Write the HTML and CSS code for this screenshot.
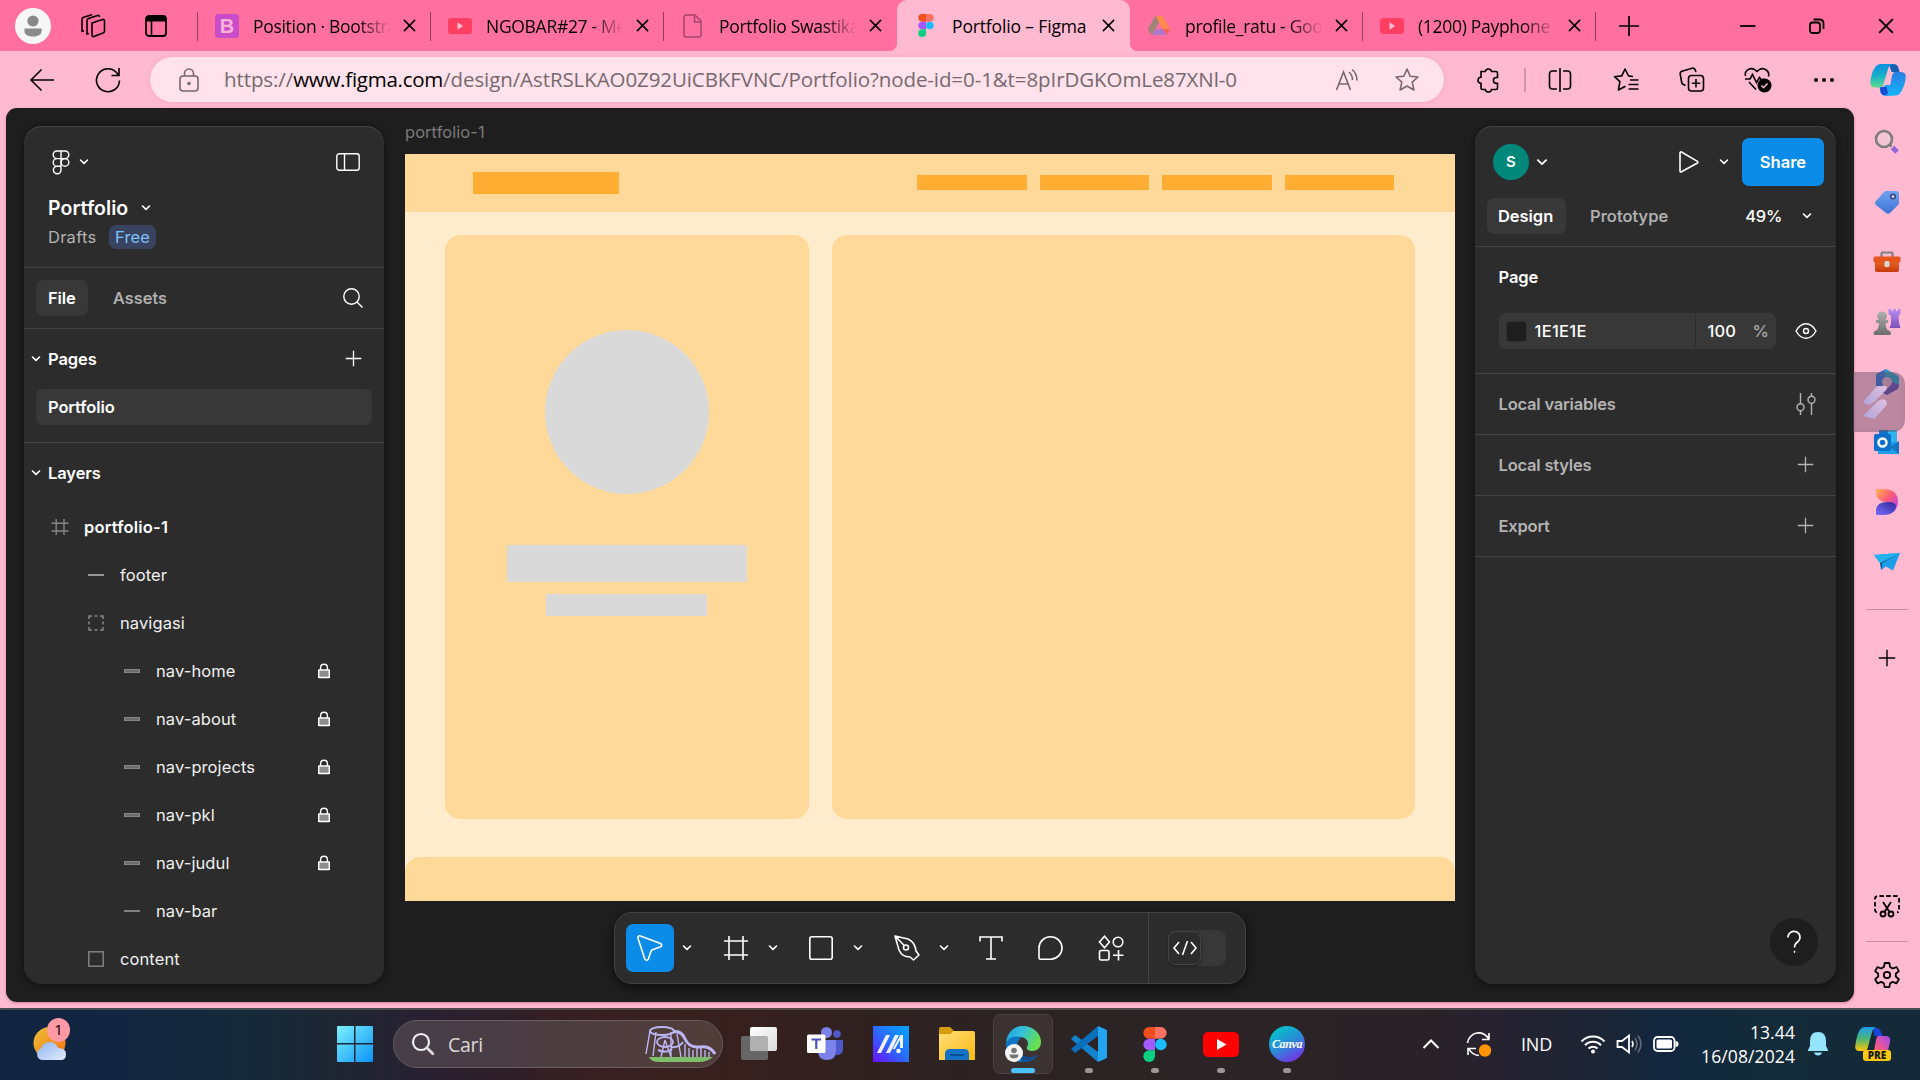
FILE: index.html
```html
<!DOCTYPE html>
<html lang="id">
<head>
<meta charset="utf-8">
<title>Portfolio – Figma</title>
<link rel="stylesheet" href="styles.css">
</head>
<body>
<svg width="0" height="0" class="defs">
  <defs>
    <linearGradient id="gWin" x1="0" y1="0" x2="1" y2="1"><stop offset="0" stop-color="#7df0ff"/><stop offset="1" stop-color="#0a93f5"/></linearGradient>
    <linearGradient id="gCop1" x1="0" y1="0" x2="0" y2="1"><stop offset="0" stop-color="#0d8fe0"/><stop offset=".5" stop-color="#16b0c8"/><stop offset="1" stop-color="#5fdc8c"/></linearGradient>
    <linearGradient id="gCop2" x1="0" y1="0" x2="0" y2="1"><stop offset="0" stop-color="#2a7de0"/><stop offset="1" stop-color="#14b4fa"/></linearGradient>
    <linearGradient id="gPre1" x1="0" y1="0" x2="0" y2="1"><stop offset="0" stop-color="#1a9df0"/><stop offset=".5" stop-color="#4fb575"/><stop offset="1" stop-color="#ffc400"/></linearGradient>
    <linearGradient id="gPre2" x1="1" y1="0" x2="0" y2="1"><stop offset="0" stop-color="#a04bf0"/><stop offset=".6" stop-color="#f0588c"/><stop offset="1" stop-color="#ff8a4a"/></linearGradient>
    <linearGradient id="gDes" x1="0" y1="0" x2="1" y2="1"><stop offset="0" stop-color="#ffb650"/><stop offset=".45" stop-color="#ff5a78"/><stop offset="1" stop-color="#a63cff"/></linearGradient>
    <linearGradient id="gDes2" x1="1" y1="0" x2="0" y2="1"><stop offset="0" stop-color="#2a2a96"/><stop offset="1" stop-color="#7d6bff"/></linearGradient>
    <linearGradient id="gTag" x1="0" y1="0" x2="0" y2="1"><stop offset="0" stop-color="#6ea2ee"/><stop offset="1" stop-color="#3f73d8"/></linearGradient>
    <linearGradient id="gBox" x1="0" y1="0" x2="0" y2="1"><stop offset="0" stop-color="#f0702c"/><stop offset="1" stop-color="#c63a0c"/></linearGradient>
    <linearGradient id="gRook" x1="0" y1="0" x2="0" y2="1"><stop offset="0" stop-color="#b98cf0"/><stop offset="1" stop-color="#7a52b8"/></linearGradient>
    <linearGradient id="gGray" x1="0" y1="0" x2="0" y2="1"><stop offset="0" stop-color="#b0b0b0"/><stop offset="1" stop-color="#6c6c6c"/></linearGradient>
    <linearGradient id="gAsus" x1="1" y1="0" x2="0" y2="1"><stop offset="0" stop-color="#00a5ff"/><stop offset=".5" stop-color="#2a6cff"/><stop offset="1" stop-color="#6a10ff"/></linearGradient>
    <linearGradient id="gFold" x1="0" y1="0" x2="1" y2="1"><stop offset="0" stop-color="#ffe07a"/><stop offset="1" stop-color="#fcb810"/></linearGradient>
    <linearGradient id="gEdge" x1="0" y1="0" x2="1" y2=".4"><stop offset="0" stop-color="#1b9de2"/><stop offset=".5" stop-color="#35c1d8"/><stop offset="1" stop-color="#66e04e"/></linearGradient>
    <linearGradient id="gCanva" x1=".2" y1="0" x2=".8" y2="1"><stop offset="0" stop-color="#00c8c8"/><stop offset=".5" stop-color="#2a8ad8"/><stop offset="1" stop-color="#7d2ae8"/></linearGradient>
    <linearGradient id="gSun" x1="0" y1="0" x2="1" y2="1"><stop offset="0" stop-color="#ecc43a"/><stop offset="1" stop-color="#f56a0c"/></linearGradient>
    <linearGradient id="gCloud" x1="0" y1="0" x2="1" y2="1"><stop offset="0" stop-color="#8fb4f0"/><stop offset="1" stop-color="#e2ecfc"/></linearGradient>
    <linearGradient id="gTV" x1="0" y1="0" x2="1" y2="1"><stop offset="0" stop-color="#fff"/><stop offset="1" stop-color="#dcdcdc"/></linearGradient>
    <linearGradient id="gPill" x1="1" y1="0" x2="0" y2="1"><stop offset="0" stop-color="#e0bfe0"/><stop offset="1" stop-color="#b0a4da"/></linearGradient>
  </defs>
  <symbol id="chev" viewBox="0 0 10 6"><path d="M1.5 1l3.5 3.4L8.5 1" fill="none" stroke="currentColor" stroke-width="1.6" stroke-linecap="round" stroke-linejoin="round"/></symbol>
  <symbol id="x" viewBox="0 0 14 14"><path d="M1 1l12 12M13 1L1 13" fill="none" stroke="currentColor" stroke-width="1.7"/></symbol>
  <symbol id="plus" viewBox="0 0 18 18"><path d="M9 .8v16.4M.8 9h16.4" fill="none" stroke="currentColor" stroke-width="1.4"/></symbol>
  <symbol id="ytOld" viewBox="0 0 24 16"><rect width="24" height="16" rx="3" fill="#ff3f62"/><path d="M9.5 4.2v7.6l5.5-3.8z" fill="#ffc0d2"/></symbol>
  <symbol id="figma" viewBox="0 0 24 36"><path d="M6 0h6v12H6A6 6 0 0 1 6 0z" fill="#f24e1e"/><path d="M12 0h6a6 6 0 0 1 0 12h-6z" fill="#ff7262"/><path d="M6 12h6v12H6a6 6 0 0 1 0-12z" fill="#a259ff"/><circle cx="18" cy="18" r="6" fill="#1abcfe"/><path d="M6 24h6v6a6 6 0 1 1-6-6z" fill="#0acf83"/></symbol>
  <symbol id="lock" viewBox="0 0 14 16"><rect x="1.8" y="7.2" width="10.4" height="7.2" fill="#8c8c8c"/><path d="M3.6 7V4.6a3.4 3.4 0 0 1 6.8 0V7M1.7 7h10.6v7.5H1.7z" fill="none" stroke="#fff" stroke-width="1.4" stroke-linejoin="round"/></symbol>
  <symbol id="bar" viewBox="0 0 16 4"><rect x=".5" y=".5" width="15" height="3" fill="#6b6b6b" stroke="#868686"/></symbol>
</svg>

<header class="tabstrip">
  <div class="profile"><svg width="36" height="36" viewBox="0 0 36 36"><circle cx="18" cy="18" r="18" fill="#f7f6f7"/><circle cx="18" cy="13" r="5.6" fill="#8a8888"/><path d="M9.5 20.5h17v3c0 3-4 5-8.500 5s-8.500-2-8.500-5z" fill="#8a8888"/></svg></div>
  <div class="stripbtn"><svg class="ic" width="26" height="24" viewBox="0 0 26 24"><path d="M12 9l10.500-3.500q2-.5 2 1.500v10q0 1.500-1.500 2L14 22.500q-2 .5-2-1.500z"/><path d="M9 19.500l-2 .5V6.500Q7 5 8.500 4.500l9-3q2-.5 2 1.500"/><path d="M4 17l-2 .5V5.500Q2 4 3.500 3.500L12 1" transform="translate(0 -.2)"/></svg></div>
  <div class="stripbtn"><svg width="22" height="22" viewBox="0 0 22 22"><rect x="1" y="1" width="20" height="20" rx="3" fill="none" stroke="#000" stroke-width="1.8"/><path d="M1 3q0-2 2-2h16q2 0 2 2v3.500H1z"/><path d="M6.500 6v15" stroke="#000" stroke-width="1.600"/></svg></div>
  <nav class="tabs">
    <div class="tab"><svg class="fav" width="24" height="24" viewBox="0 0 24 24"><rect width="24" height="24" rx="3" fill="#c94dc8"/><text x="12" y="19" text-anchor="middle" class="bs">B</text></svg><span class="tt">Position · Bootstra</span><svg class="cl"><use href="#x"/></svg></div>
    <div class="tab"><svg class="fav" width="24" height="16"><use href="#ytOld"/></svg><span class="tt">NGOBAR#27 - Me</span><svg class="cl"><use href="#x"/></svg></div>
    <div class="tab"><svg class="fav" width="24" height="24" viewBox="0 0 24 24"><path d="M5 1h9l6 6v14q0 2-2 2H5q-2 0-2-2V3q0-2 2-2zM13.500 1v7H20" fill="none" stroke="#a34569" stroke-width="1.500" stroke-linejoin="round"/></svg><span class="tt">Portfolio Swastika</span><svg class="cl"><use href="#x"/></svg></div>
    <div class="tab active"><svg class="fav" width="24" height="23"><use href="#figma"/></svg><span class="tt full">Portfolio – Figma</span><svg class="cl"><use href="#x"/></svg></div>
    <div class="tab"><svg class="fav" width="24" height="21" viewBox="0 0 24 21"><path d="M8.500 1h7l-8 14-3.500 5L1 14z" fill="#a87c7c"/><path d="M8.500 1h7L23 14h-7z" fill="#ff8a4c"/><path d="M1 14l7.500-13L12 7 5 20z" fill="#a08478"/><path d="M5 20l3.500-6H23l-3.500 6z" fill="#b078c8"/><path d="M16 14h7l-3.500 6z" fill="#ff5a5c"/></svg><span class="tt">profile_ratu - Goo</span><svg class="cl"><use href="#x"/></svg></div>
    <div class="tab"><svg class="fav" width="24" height="16"><use href="#ytOld"/></svg><span class="tt">(1200) Payphone</span><svg class="cl"><use href="#x"/></svg></div>
  </nav>
  <div class="newtab"><svg width="22" height="22"><use href="#plus"/></svg></div>
  <div class="winctl">
    <span><svg width="16" height="16" viewBox="0 0 16 16"><path d="M0 8h15.500" stroke="#000" stroke-width="1.800"/></svg></span>
    <span><svg class="ic w18" width="16" height="16" viewBox="0 0 16 16"><rect x="1" y="4.500" width="10" height="10.500" rx="2.500"/><path d="M4.500 1.500h6q4 0 4 4V11"/></svg></span>
    <span><svg width="16" height="16"><use href="#x"/></svg></span>
  </div>
</header>

<div class="toolbar">
  <span class="tb"><svg class="ic" width="26" height="24" viewBox="0 0 26 24"><path d="M25 12H2M12.500 1.500L2 12l10.500 10.500"/></svg></span>
  <span class="tb"><svg class="ic" width="26" height="26" viewBox="0 0 26 26"><path d="M24.500 13.500A11.500 11.500 0 1 1 21 5l2.500 3M24 1v7.500h-7.500"/></svg></span>
  <div class="address">
    <svg class="ic lockurl" width="20" height="24" viewBox="0 0 20 24"><rect x="1" y="8" width="18" height="15" rx="3"/><path d="M5.500 8V5.500a4.500 4.500 0 0 1 9 0V8"/><circle cx="10" cy="15.500" r="1" fill="currentColor"/></svg>
    <span class="url">https://<b>www.figma.com</b>/design/AstRSLKAO0Z92UiCBKFVNC/Portfolio?node-id=0-1&amp;t=8pIrDGKOmLe87XNl-0</span>
    <svg class="ic" width="26" height="24" viewBox="0 0 26 24"><path d="M1.500 22L8.500 4l7 18M4 16h9M14 4q3.500 3 3.500 8M17 1.500q5 4 5 11"/></svg>
    <svg class="ic star" width="26" height="26" viewBox="0 0 26 26"><path d="M13 2l3.200 7.200 7.800.8-5.800 5.200 1.700 7.800-6.900-4-6.900 4 1.700-7.800L2 10l7.800-.8z" stroke-linejoin="round"/></svg>
  </div>
  <span class="tb"><svg class="ic" width="24" height="26" viewBox="0 0 24 26"><path d="M5 4.500h4.200a3.300 3.300 0 0 1 6.400 0H20q1.500 0 1.500 1.500v4.500h-1.200a2.900 2.900 0 0 0 0 5.800h1.200V21q0 1.500-1.500 1.500h-4.400a3.300 3.300 0 0 1-6.400 0H6.500Q5 22.500 5 21v-4.700a3 3 0 0 1 0-6z"/></svg></span>
  <i class="vsep"></i>
  <span class="tb"><svg class="ic" width="24" height="24" viewBox="0 0 24 24"><path d="M9 3H4.500Q1.500 3 1.500 6v12q0 3 3 3H9M15 3h4.500q3 0 3 3v12q0 3-3 3H15M12 0v24"/></svg></span>
  <span class="tb"><svg class="ic" width="26" height="24" viewBox="0 0 26 24"><path d="M20 8.500l-4.500-.6L12 1 8.800 7.900l-7.300.8 5.400 5L5.400 22l7-3.800M17 12h8.500M15.500 16.500h10M15.500 21h10" stroke-linejoin="round"/></svg></span>
  <span class="tb"><svg class="ic" width="26" height="26" viewBox="0 0 26 26"><rect x="9.500" y="8.500" width="15" height="15.500" rx="3"/><path d="M17 12v8.500M12.800 16.200h8.500M6.500 18.500l-2-1Q3 17 2.700 15.500L1.200 7Q.9 5 3 4.200l10-3q2-.5 3 1.300l1 2.500"/></svg></span>
  <span class="tb"><svg class="ic" width="28" height="26" viewBox="0 0 28 26"><path d="M1.500 9C0 4 6 0 10.500 2.500L13 4.500l2.500-2C20 0 26 4 24.500 9.500M1 12h5l2.500-4.500 4 8 3-5 1.500 2h4M5 15l7 7.500"/><circle cx="20.500" cy="18.500" r="7" fill="#000" stroke="none"/><path d="M17.500 18.500l2 2.200 4-4.200" stroke="#ffb9d1"/></svg></span>
  <span class="tb"><svg width="22" height="6" viewBox="0 0 22 6"><circle cx="3" cy="3" r="2"/><circle cx="11" cy="3" r="2"/><circle cx="19" cy="3" r="2"/></svg></span>
  <span class="tb"><svg width="36" height="33" viewBox="0 0 36 33"><path d="M15 22l-5 6q1 4.500 5 4.500h7q4 0 5.500-4.500l2-6z" fill="#1ba6f5"/><path d="M9.500 24h7l2 8.500h-3q-4 0-5-4z" fill="#1a4bd6"/><path d="M19 1h4q4.500 0 5.500 4l1 4h-8z" fill="#155fb4"/><path d="M11 1h12q-4 1-5 5l-4.500 15q-1 3.500-4.500 3.500H5q-5.500 0-4.500-7Q2 8 5 4.500 7 1 11 1z" fill="url(#gCop1)"/><path d="M25 9h6q5.500 0 4.700 6-1 8-4.200 13-2 4.500-6 4.500H14q4-1 5-4.500l3-15q1-4 3-4z" fill="url(#gCop2)"/></svg></span>
</div>

<main class="body">
  <div class="stage">
    <aside class="panel left">
      <div class="phead">
        <svg class="ic w14" width="18" height="25" viewBox="0 0 18 25"><path d="M9 1H5a3.800 3.800 0 0 0 0 7.600h4zM9 1h4a3.800 3.800 0 0 1 0 7.600H9zM9 8.600H5a3.800 3.800 0 0 0 0 7.600h4zM9 16.200H5A3.800 3.800 0 1 0 9 20z"/><circle cx="13" cy="12.400" r="3.800"/></svg>
        <svg class="chev g14"><use href="#chev"/></svg>
        <svg class="ic w14 end" width="24" height="18" viewBox="0 0 24 18"><rect x=".8" y=".8" width="22.400" height="16.400" rx="2.500"/><path d="M8.500 1v16"/></svg>
      </div>
      <div class="fname"><strong>Portfolio</strong><svg class="chev"><use href="#chev"/></svg></div>
      <div class="drafts"><span>Drafts</span><em>Free</em></div>
      <div class="ptabs"><span class="pill">File</span><span class="mut">Assets</span><svg class="ic w14 end" width="20" height="20" viewBox="0 0 20 20"><circle cx="8.500" cy="8.500" r="7.700"/><path d="M14 14l5.500 5.500"/></svg></div>
      <div class="sect"><svg class="chev"><use href="#chev"/></svg><b>Pages</b><svg class="end" width="17" height="17"><use href="#plus"/></svg></div>
      <div class="pageitem">Portfolio</div>
      <div class="sect layers"><svg class="chev"><use href="#chev"/></svg><b>Layers</b></div>
      <ul class="tree">
        <li class="l0"><svg class="ic w14" width="18" height="18" viewBox="0 0 18 18"><path d="M5.200 1v16M13 1v16M.5 5.200h17M.5 13h17"/></svg><b>portfolio-1</b></li>
        <li class="l1"><svg width="16" height="4" viewBox="0 0 16 4"><path d="M0 2h16" stroke="#969696" stroke-width="2"/></svg>footer</li>
        <li class="l1"><svg width="16" height="16" viewBox="0 0 16 16"><path d="M1 4V1h3M6.500 1h3M12 1h3v3M15 6.500v3M15 12v3h-3M9.500 15h-3M4 15H1v-3M1 9.500v-3" fill="none" stroke="#868686" stroke-width="1.500"/></svg>navigasi</li>
        <li class="l2"><svg width="16" height="4"><use href="#bar"/></svg>nav-home<svg class="lk"><use href="#lock"/></svg></li>
        <li class="l2"><svg width="16" height="4"><use href="#bar"/></svg>nav-about<svg class="lk"><use href="#lock"/></svg></li>
        <li class="l2"><svg width="16" height="4"><use href="#bar"/></svg>nav-projects<svg class="lk"><use href="#lock"/></svg></li>
        <li class="l2"><svg width="16" height="4"><use href="#bar"/></svg>nav-pkl<svg class="lk"><use href="#lock"/></svg></li>
        <li class="l2"><svg width="16" height="4"><use href="#bar"/></svg>nav-judul<svg class="lk"><use href="#lock"/></svg></li>
        <li class="l2"><svg width="16" height="4" viewBox="0 0 16 4"><path d="M0 2h16" stroke="#808080" stroke-width="2"/></svg>nav-bar</li>
        <li class="l1"><svg width="16" height="16" viewBox="0 0 16 16"><rect x=".8" y=".8" width="14.400" height="14.400" fill="none" stroke="#868686" stroke-width="1.400"/></svg>content</li>
      </ul>
    </aside>

    <section class="canvas">
      <div class="framename">portfolio-1</div>
      <div class="artboard">
        <div class="a-nav"><i class="a-title"></i><i class="a-link"></i><i class="a-link"></i><i class="a-link"></i><i class="a-link"></i></div>
        <div class="a-main">
          <div class="a-card"><i class="a-photo"></i><i class="a-line"></i><i class="a-line small"></i></div>
          <div class="a-card wide"></div>
        </div>
        <div class="a-footer"></div>
      </div>
      <div class="tools">
        <span class="tool sel"><svg class="ic" width="28" height="28" viewBox="0 0 28 28"><path d="M2 4.200L8.800 25q.5 1.300 1.800 1.300t1.800-1.300l2.500-7.500q.5-1.200 1.600-1.700l8-3q1.200-.5 1.200-1.700t-1.200-1.700L4.500 2Q3.200 1.500 2.400 2.300T2 4.200z" stroke-linejoin="round"/></svg></span>
        <svg class="chev"><use href="#chev"/></svg>
        <span class="tool"><svg class="ic" width="24" height="24" viewBox="0 0 24 24"><path d="M5 0v24M19 0v24M0 5h24M0 19h24"/></svg></span>
        <svg class="chev"><use href="#chev"/></svg>
        <span class="tool"><svg class="ic" width="24" height="24" viewBox="0 0 24 24"><rect x=".8" y=".8" width="22.400" height="22.400" rx="2"/></svg></span>
        <svg class="chev"><use href="#chev"/></svg>
        <span class="tool"><svg class="ic" width="26" height="26" viewBox="0 0 26 26"><path d="M1 1l13 3q7 3 8 12l3 4-5.500 5-3.500-3Q8 22 5 15zM1 1l9.500 9.800" stroke-linejoin="round"/><circle cx="12" cy="12.500" r="2.500"/></svg></span>
        <svg class="chev"><use href="#chev"/></svg>
        <span class="tool t1"><svg class="ic" width="24" height="24" viewBox="0 0 24 24"><path d="M1 5.500V1h22v4.500M12 1v22M7 23h10"/></svg></span>
        <span class="tool t2"><svg class="ic" width="26" height="24" viewBox="0 0 26 24"><path d="M1 12A11.500 11.200 0 1 1 13 23.200H2.500Q1 23.200 1 21.700z"/></svg></span>
        <span class="tool t3"><svg class="ic" width="26" height="26" viewBox="0 0 26 26"><path d="M6.500 1.200l5 5.800-5 5.800L1.500 7zM20.500 15v10.500M15 20.200h10.500"/><circle cx="20" cy="7" r="4.800"/><rect x="1.500" y="15.500" width="9.500" height="9.500" rx="1.500"/></svg></span>
        <i class="tdiv"></i>
        <span class="toggle"><span><svg class="ic" width="24" height="16" viewBox="0 0 24 16"><path d="M6 2L1 8l5 6M18 2l5 6-5 6M14.500 1l-5 14"/></svg></span></span>
      </div>
    </section>

    <aside class="panel right">
      <div class="rhead">
        <span class="ava">S</span><svg class="chev big"><use href="#chev"/></svg>
        <svg class="ic play" width="20" height="22" viewBox="0 0 20 22"><path d="M1 2.200v17.600q0 1.700 1.500 1L18 12.300q1.700-1 0-2.200L2.500 1Q1 .5 1 2.200z"/></svg>
        <svg class="chev"><use href="#chev"/></svg><span class="share">Share</span>
      </div>
      <div class="rtabs"><span class="pill">Design</span><span class="mut">Prototype</span><span class="zoom">49%</span><svg class="chev"><use href="#chev"/></svg></div>
      <div class="page">
        <b>Page</b>
        <div class="fill"><div class="field"><i></i><span>1E1E1E</span><span class="pc">100</span><span class="pct">%</span></div>
        <svg class="ic w14" width="22" height="16" viewBox="0 0 22 16"><path d="M1 8Q5 .8 11 .8T21 8q-4 7.200-10 7.200T1 8z"/><circle cx="11" cy="8" r="2.500"/></svg></div>
      </div>
      <div class="rrow">Local variables<svg class="ic w14" width="20" height="22" viewBox="0 0 20 22"><path d="M4.500 0v10.500M4.500 18v4M15.500 0v3M15.500 10.500V22"/><circle cx="4.500" cy="14.300" r="3.500"/><circle cx="15.500" cy="6.800" r="3.500"/></svg></div>
      <div class="rrow">Local styles<svg class="pl" width="17" height="17"><use href="#plus"/></svg></div>
      <div class="rrow">Export<svg class="pl" width="17" height="17"><use href="#plus"/></svg></div>
      <div class="help"><svg class="ic" width="14" height="22" viewBox="0 0 14 22"><path d="M1 6.500A6 5.800 0 1 1 11 10.500Q7.500 13 7.500 16.500"/><circle cx="7.500" cy="20.800" r=".6" fill="#fff" stroke-width="1"/></svg></div>
    </aside>
  </div>

  <aside class="edgebar">
    <span><svg width="26" height="26" viewBox="0 0 26 26"><circle cx="10" cy="10" r="8" fill="#f3c6d6" stroke="#7c7c7c" stroke-width="2.600"/><path d="M15.500 15.500l2 2" stroke="#777" stroke-width="2.500"/><path d="M18.500 18.500l4.500 4.500" stroke="#9166d8" stroke-width="5"/></svg></span>
    <span><svg width="26" height="26" viewBox="0 0 26 26"><path d="M12 2h10q3 0 3 3v9q0 1-1 2l-8 8q-2 1.500-4 0L2 16q-2-2 0-4l8-9q1-1 2-1z" fill="url(#gTag)"/><circle cx="19" cy="7.500" r="2.300" fill="#d4c0e8" stroke="#2f4580" stroke-width="1.500"/></svg></span>
    <span><svg width="28" height="22" viewBox="0 0 28 22"><path d="M8.500 6V2.500q0-1 1-1h9q1 0 1 1V6" fill="none" stroke="#808080" stroke-width="2.200"/><path d="M2 8h24v11q0 2-2 2H4q-2 0-2-2z" fill="url(#gBox)"/><rect x=".5" y="5.500" width="27" height="6" rx="1.500" fill="#e8551c"/><rect x="11.500" y="10" width="5" height="6" rx="1.500" fill="#d8d8d8"/></svg></span>
    <span><svg width="28" height="28" viewBox="0 0 28 28"><path d="M15.500 1h2.500v2h2V1h3v2h2V1h2.500v5l-2 2 .8 8 1.200 4h-11l1.500-4L18 8l-2.500-2z" fill="url(#gRook)"/><path d="M9 3.500a4.800 4.800 0 0 1 3.200 8.500H15v3h-2.500q0 4 2 7 3.500 1 3.500 3.500 0 1.500-2 1.500H2.500q-2 0-2-1.500Q.5 23 4 22q2-3 2-7H3v-3h3A4.800 4.800 0 0 1 9 3.500z" fill="url(#gGray)"/></svg></span>
    <span><svg width="26" height="28" viewBox="0 0 26 28"><path d="M12 1L2 6v15l6 3 2-13z" fill="#2c6fd0"/><path d="M12 1l11 6q2 1 2 3v9l-7-5-8-4z" fill="#1f9ec2"/><path d="M25 17q0 3-2 4.500L13 27l-8-4 9-3 4-6z" fill="#5d4aa8"/><circle cx="13" cy="14" r="5" fill="#d9a4bd"/></svg></span>
    <span><svg width="26" height="26" viewBox="0 0 26 26"><path d="M5 1h18v12H5z" fill="#2cb4f0"/><path d="M5 1h9v6H5z" fill="#0f78cc"/><path d="M4 13h21v12H4z" fill="#1d9fe6"/><path d="M25 12v13l-9-7z" fill="#1474c0"/><rect y="5" width="17" height="17" rx="1.500" fill="#0d6fc8"/><circle cx="8.500" cy="13.500" r="4" fill="none" stroke="#fff" stroke-width="2.500"/></svg></span>
    <span><svg width="24" height="28" viewBox="0 0 24 28"><path d="M1 1h9q13 1 13 13 0 8-7 11l-5-11Q1 13 1 4z" fill="url(#gDes)"/><path d="M1 27v-5q1-8 11-8 9 0 9 4-1 9-12 9z" fill="url(#gDes2)"/></svg></span>
    <span><svg width="26" height="20" viewBox="0 0 26 20"><path d="M0 3L26 1l-7 17.500-7-4-5 3.500-1-7z" fill="#1c9ee8"/><path d="M26 1L8 11v7l-2-7z" fill="#0b4a86"/><path d="M0 3L26 1 6 11z" fill="#22b2ec"/></svg></span>
    <hr>
    <span class="ebp"><svg width="18" height="18"><use href="#plus"/></svg></span>
    <span class="ebs"><svg class="ic w18" width="26" height="24" viewBox="0 0 26 24"><path d="M3 17.500q-2-.5-2-2.500V4q0-3 3-3h18q3 0 3 3v11q0 2-2 2.500" stroke-dasharray="4.500 2.300"/><path d="M9 7l6.500 10M17 7l-6.500 10"/><circle cx="9" cy="19" r="2.500"/><circle cx="17" cy="19" r="2.500"/></svg></span>
    <hr>
    <span class="ebg"><svg class="ic w18" width="26" height="26" viewBox="0 0 26 26"><path d="M10.700 1h4.600l.8 4 2.600 1.500 3.900-1.400 2.300 4-3.100 2.700v2.800l3.100 2.700-2.300 4-3.900-1.400-2.600 1.500-.8 3.700h-4.600l-.8-3.700-2.600-1.500-3.900 1.400-2.300-4 3.100-2.700v-2.800L1.100 9.100l2.300-4 3.900 1.400L9.900 5z" stroke-linejoin="round"/><circle cx="13" cy="13" r="3.200"/></svg></span>
    <div class="floater"><svg width="28" height="36" viewBox="0 0 28 36"><path d="M1 17L14 2h9q2 3-1 5L11 18q-4 4-8 2t-2-3z" fill="url(#gPill)"/><path d="M0 32L14 18q4-4 8-2 4 3 0 7L11 35z" fill="url(#gPill)"/></svg></div>
  </aside>
</main>

<footer class="taskbar">
  <div class="widget"><svg width="36" height="34" viewBox="0 0 36 34"><circle cx="16.500" cy="16" r="16" fill="url(#gSun)"/><path d="M9 33a6 6 0 0 1-1-11.500Q10 15 17 15q6 0 8 6 8 0 8 6 0 6-5 6z" fill="url(#gCloud)"/></svg><em>1</em></div>
  <svg class="start" width="36" height="36" viewBox="0 0 36 36"><path d="M0 1q0-1 1-1h16v17H0zM18.500 0H35q1 0 1 1v16H18.500zM0 18.500h17V36H1q-1 0-1-1zM18.500 18.500H36V35q0 1-1 1H18.500z" fill="url(#gWin)"/></svg>
  <div class="search"><svg width="24" height="24" viewBox="0 0 24 24"><circle cx="10" cy="10" r="8" fill="none" stroke="#eee" stroke-width="2.200"/><path d="M15.800 15.800l6 6" stroke="#ddd" stroke-width="2.800" stroke-linecap="round"/></svg><span>Cari</span>
    <svg class="coaster" width="72" height="36" viewBox="0 0 72 36"><path d="M4 31h64q-6 5-14 5H14Q6 36 4 31z" fill="#7fbf6c"/><g fill="none" stroke="#bdb6f5"><path d="M5 5L1 28M11 6L8 30M26 6v25M32 8l4 23M20 14l-4 17M20 14l6 17M40 18v13M44 22v9M48 24v7M52 22v9M56 22v9M60 24v7M64 26v5" stroke-width="1.400"/><ellipse cx="17" cy="5" rx="12" ry="4" stroke-width="2"/><ellipse cx="20" cy="16" rx="8" ry="5" stroke-width="1.800"/><path d="M13 24q8 4 14-1" stroke-width="2"/><path d="M28 6q8-2 12 7t15 8q10-2 15 7" stroke-width="3"/><path d="M26 21q8 1 12-5" stroke-width="2"/></g></svg></div>
  <div class="apps">
    <span><svg width="36" height="34" viewBox="0 0 36 34"><rect y="9" width="27" height="24" rx="2" fill="#666"/><rect x="9" y="0" width="27" height="24" rx="2" fill="url(#gTV)"/><path d="M9 9h16q2 0 2 2v13H11q-2 0-2-2z" fill="#b0b0b0"/></svg></span>
    <span><svg width="36" height="34" viewBox="0 0 36 34"><circle cx="19.500" cy="5.500" r="5.500" fill="#7b83eb"/><circle cx="30" cy="7" r="3.800" fill="#5059c9"/><path d="M24 13h12v9q0 6-7 6z" fill="#5059c9"/><path d="M11 13h18v11q0 9-9 9t-9-9z" fill="#7b83eb"/><rect y="7.500" width="18.500" height="18.500" rx="1.500" fill="#fff"/><path d="M4.500 12.500h9.500M9.300 12.500v9.500" stroke="#4b53bc" stroke-width="2.200"/></svg></span>
    <span><svg width="36" height="36" viewBox="0 0 36 36"><path d="M0 0h36v36H0z" fill="url(#gAsus)"/><path d="M4 27l9-18h4L8 27zM13 27l9-18h4l-9 18zM27.500 9H30v13h-3v-8l-5 9h-2.500z" fill="#fff" opacity=".92"/><circle cx="25.500" cy="25" r="2.200" fill="#fff"/></svg></span>
    <span><svg width="36" height="34" viewBox="0 0 36 34"><path d="M0 2q0-2 2-2h9l4 4v4H0z" fill="#d89b0a"/><path d="M0 7h11l4-3h19q2 0 2 2v27H0z" fill="url(#gFold)"/><path d="M6 33v-6q0-5 5-5h14q5 0 5 5v6z" fill="#1272c8"/><path d="M11 28h14" stroke="#0a4d90" stroke-width="2"/></svg></span>
    <span class="on"><svg width="36" height="36" viewBox="0 0 36 36"><path d="M1 17C2 6 9 0 18 0c10 0 18 7 18 16 0 6-4 9-9 9-4 0-6-2-5-4 3-5-1-10-7-10C8 11 3 14 1 17z" fill="url(#gEdge)"/><path d="M1 17c3-6 10-8 15-5-4 3-5 9-2 14 4 6 12 7 18 4-4 5-9 6-14 6C7 36 0 28 1 17z" fill="#0f74c4"/><path d="M14 26c4 6 12 7 19 2-4 6-9 8-15 8-3-2-5-5-4-10z" fill="#124f92"/><circle cx="9" cy="27" r="9" fill="#f5f5f5"/><circle cx="9" cy="24.500" r="2.800" fill="#777"/><path d="M4.500 28.500h9q0 4-4.500 4t-4.500-4z" fill="#777"/></svg></span>
    <span><svg width="36" height="36" viewBox="0 0 36 36"><path d="M27 0l9 4v28l-9 4z" fill="#22a4f0"/><path d="M27 36L0 13l4-4 23 17z" fill="#1283cc"/><path d="M27 0L0 23l4 4 23-17z" fill="#0a6fb8"/></svg><i></i></span>
    <span><svg width="24" height="35"><use href="#figma"/></svg><i></i></span>
    <span><svg width="36" height="25" viewBox="0 0 36 25"><rect width="36" height="25" rx="5" fill="#f00"/><path d="M14 7v11l9.500-5.500z" fill="#fff"/></svg><i></i></span>
    <span><svg width="36" height="36" viewBox="0 0 36 36"><circle cx="18" cy="18" r="18" fill="url(#gCanva)"/><text x="18" y="22" text-anchor="middle" class="cv">Canva</text></svg><i></i></span>
  </div>
  <div class="tray">
    <svg class="ic caret" width="18" height="12" viewBox="0 0 18 12"><path d="M1.500 10L9 2.500l7.500 7.500" stroke-width="2"/></svg>
    <svg class="ic sync" width="26" height="26" viewBox="0 0 26 26"><path d="M1.500 12A11.300 11.300 0 0 1 23 8.500V2M23.500 8.500H16M2 24v-6.500h8M3 18q3 6 10 6.500"/><circle cx="19" cy="19.500" r="6.200" fill="#ff9500" stroke="none"/></svg>
    <span class="ind">IND</span>
    <svg class="ic wifi" width="26" height="20" viewBox="0 0 26 20"><path d="M1.500 7.500a16 16 0 0 1 23 0M5 11.300a11 11 0 0 1 16 0M8.500 14.500a6.500 6.500 0 0 1 9 0" stroke-width="2"/><circle cx="13" cy="17.500" r="2" fill="#fff" stroke="none"/></svg>
    <svg class="ic spk" width="26" height="20" viewBox="0 0 26 20"><path d="M1.500 7H6l7-5.500v17L6 13H1.500z" stroke-width="1.800"/><path d="M16 7q2 3 0 6" stroke-width="1.600"/><path d="M19 4q4 6 0 12M22 1.500q6 8.500 0 17" stroke="#666a76"/></svg>
    <svg class="bat" width="26" height="16" viewBox="0 0 26 16"><rect x="1" y="1" width="20.500" height="14" rx="3.500" fill="none" stroke="#fff" stroke-width="1.800"/><rect x="3.500" y="3.500" width="15.500" height="9" rx="1.500" fill="#fff"/><path d="M22.500 5q3 0 3 3t-3 3z" fill="#fff"/></svg>
    <div class="clock">13.44<br>16/08/2024</div>
    <svg class="bell" width="20" height="24" viewBox="0 0 20 24"><path d="M10 0q8 0 8 9v5l2 4v1H0v-1l2-4V9q0-9 8-9zM6 20.500h8q-1 3-4 3t-4-3z" fill="#94e4fd"/></svg>
    <div class="copre"><svg width="36" height="28" viewBox="0 0 36 28"><path d="M18 1h3q4 0 5 4l1.500 4h-8z" fill="#1b45d8"/><path d="M10 0h11q-3 1-4 5l-4 15q-1 4-4 4H4q-5 0-3.500-7Q2 8 4 4.500 6 0 10 0z" fill="url(#gPre1)"/><path d="M23 9h8q5 0 4 6l-3 13H16q2 0 3-4l2-11q1-4 2-4z" fill="url(#gPre2)"/></svg><em>PRE</em></div>
  </div>
</footer>
</body>
</html>
```

FILE: styles.css
```css
* { box-sizing: border-box; }
body { margin: 0; width: 1920px; height: 1080px; overflow: hidden; display: flex; flex-direction: column; background: #ffb9d1; font-family: "Open Sans", "Noto Sans", sans-serif; color: #000; }
svg { display: block; flex: none; overflow: visible; }
.defs { position: absolute; }
.ic { fill: none; stroke: currentColor; stroke-width: 1.6; }
.ic.w14 { stroke-width: 1.4; }
.ic.w18 { stroke-width: 1.8; }
.end { margin-left: auto; }

/* tab strip */
.tabstrip { height: 51px; background: #ff70a1; display: flex; align-items: center; flex: none; }
.profile { width: 60px; padding-left: 15px; }
.stripbtn { width: 63px; display: flex; justify-content: center; padding-left: 2px; }
.tabs { display: flex; margin-left: 12px; height: 51px; }
.tab { width: 233px; height: 51px; display: flex; align-items: center; padding-left: 17px; position: relative; }
.tab::before { content: ""; position: absolute; left: -1px; top: 12px; width: 1px; height: 29px; background: #8c3e5b; }
.tab.active::before, .tab.active + .tab::before { display: none; }
.tab:last-child::after { content: ""; position: absolute; right: 0; top: 12px; width: 1px; height: 29px; background: #8c3e5b; }
.tab.active { background: #ffb9d1; border-radius: 10px 10px 0 0; }
.tab.active::after { content: ""; position: absolute; left: -8px; right: -8px; bottom: 0; height: 8px; background: radial-gradient(circle at 0 0, transparent 8px, #ffb9d1 8.5px) left / 8px 8px no-repeat, radial-gradient(circle at 100% 0, transparent 8px, #ffb9d1 8.5px) right / 8px 8px no-repeat; }
.tt { margin-left: 14px; width: 139px; white-space: nowrap; overflow: hidden; font-size: 17.5px; letter-spacing: -.3px; line-height: 30px; -webkit-mask-image: linear-gradient(90deg, #000 104px, transparent 138px); mask-image: linear-gradient(90deg, #000 104px, transparent 138px); }
.tt.full { letter-spacing: -.15px; -webkit-mask-image: none; mask-image: none; }
.cl { width: 13px; height: 13px; margin-left: 11px; }
.bs { font: 700 20px "Liberation Sans", sans-serif; fill: #ffb3d9; }
.newtab { margin-left: 22px; }
.winctl { margin-left: auto; display: flex; }
.winctl span { width: 69px; display: flex; justify-content: center; }

/* toolbar */
.toolbar { height: 57px; flex: none; display: flex; align-items: center; padding-left: 9px; background: #ffb9d1; }
.tb { width: 66px; display: flex; justify-content: center; flex: none; }
.toolbar > .tb:last-child { width: 62px; }
.address { width: 1294px; height: 45px; margin: 0 11px 0 9px; border-radius: 23px; background: #ffe2eb; display: flex; align-items: center; padding: 0 24px 0 29px; color: #75696e; flex: none; box-shadow: 0 0 5px #f5a6c0; }
.url { margin-left: 25px; width: 1113px; white-space: nowrap; font-size: 20.5px; letter-spacing: -.09px; line-height: 28px; padding-bottom: 2px; color: #75696e; }
.url b { font-weight: 400; color: #000; letter-spacing: -.25px; }
.address .star { margin-left: 33px; }
.vsep { width: 2px; height: 24px; margin: 0 1px 0 3px; background: #cf95a9; flex: none; }

/* body */
.body { height: 900px; flex: none; display: flex; padding-left: 6px; }
.stage { width: 1848px; height: 894px; border-radius: 11px; background: #1e1e1e; display: flex; padding: 18px; color: #fff; font-family: Inter, sans-serif; font-size: 16.5px; letter-spacing: .1px; box-shadow: 0 1px 3px #c98298; }
.panel { background: #2c2c2c; border-radius: 18px; height: 858px; flex: none; overflow: hidden; box-shadow: inset 0 1px #444, 0 2px 6px #111; display: flex; flex-direction: column; }
.panel b, .pill, .pageitem { font-weight: 600; letter-spacing: -.1px; }
.panel .mut { font-weight: 500; -webkit-text-stroke: .2px; }
.chev { width: 10px; height: 6px; }
.left { width: 360px; }
.phead { height: 36px; margin-top: 18px; padding: 0 24px 0 28px; display: flex; align-items: center; }
.g14 { margin-left: 9px; }
.fname { height: 32px; margin-top: 12px; padding-left: 24px; display: flex; align-items: center; }
.fname strong { font-size: 19.5px; font-weight: 600; letter-spacing: .05px; width: 93px; }
.drafts { height: 24px; margin-top: 1px; padding-left: 24px; display: flex; align-items: center; color: #b3b3b3; }
.drafts span { width: 61px; letter-spacing: .25px; }
em { font-style: normal; }
.drafts em { width: 47px; height: 24px; border-radius: 7px; background: #394360; color: #7cc4f8; text-align: center; line-height: 24px; }
.ptabs { height: 62px; margin-top: 18px; border: solid #444; border-width: 1px 0; padding: 0 21px 0 12px; display: flex; align-items: center; }
.pill { height: 36px; line-height: 36px; padding: 0 12px; border-radius: 7px; background: #383838; }
.mut { color: #b3b3b3; margin-left: 25px; }
.ptabs .pill { width: 52px; }
.sect { height: 60px; padding: 0 22px 0 7px; display: flex; align-items: center; }
.sect b { margin-left: 7px; }
.sect .end { margin-bottom: 2px; }
.pageitem { margin: 0 12px; height: 36px; border-radius: 7px; background: #383838; padding-left: 12px; line-height: 36px; }
.layers { margin-top: 17px; border-top: 1px solid #444; }
.tree { list-style: none; margin: 1px 0 0; padding: 0; }
.tree li { height: 48px; display: flex; align-items: center; color: #f0f0f0; }
.tree li > svg:first-child { color: #868686; margin-right: 16px; }
.tree .l0 { padding-left: 27px; }
.tree .l0 > svg:first-child { margin-right: 15px; }
.l0 b { color: #fff; }
.panel .l0 b { letter-spacing: .2px; }
.tree .l1 { padding-left: 64px; }
.tree .l2 { padding-left: 100px; }
.tree .lk { width: 14px; height: 16px; margin: 0 53px 0 auto; }

.canvas { width: 1050px; margin: 0 20px 0 21px; display: flex; flex-direction: column; align-items: center; }
.framename { align-self: flex-start; height: 27.500px; line-height: 13px; font-size: 16.5px; color: #7a7a7a; letter-spacing: .05px; }
.artboard { width: 1050px; height: 747.500px; background: #ffeccd; display: flex; flex-direction: column; flex: none; }
.a-nav { height: 58.500px; background: #ffd99a; display: flex; align-items: center; padding: 0 61px 0 68px; gap: 13px; }
.a-title { width: 146px; height: 22px; background: #ffae33; margin-right: auto; }
.a-link { width: 109.500px; height: 15px; background: #ffae33; }
.a-main { flex: 1; display: flex; gap: 23px; padding: 23px 40px 38px 39.500px; }
.a-card { width: 364.500px; border-radius: 15px; background: #ffd99a; display: flex; flex-direction: column; align-items: center; }
.a-card.wide { width: auto; flex: 1; }
.a-photo { width: 164px; height: 164px; border-radius: 50%; background: #d9d9d9; margin-top: 95px; }
.a-line { width: 240px; height: 37px; background: #d9d9d9; margin-top: 51px; }
.a-line.small { width: 161px; height: 22px; margin-top: 11.500px; }
.a-footer { height: 44px; border-radius: 15px 15px 0 0; background: #ffd99a; }
.tools { width: 632px; height: 72px; margin-top: 11px; border-radius: 18px; background: #2c2c2c; border: 1px solid #434343; box-shadow: 0 3px 8px #0d0d0d; display: flex; align-items: center; padding-left: 11px; flex: none; }
.tool { width: 48px; height: 48px; border-radius: 7px; display: flex; align-items: center; justify-content: center; flex: none; }
.tool.sel { background: #0c8ce9; }
.tools .chev { margin: 0 19.500px 0 8px; flex: none; }
.tool.t1 { margin-left: -1px; }
.tool.t2, .tool.t3 { margin-left: 12px; }
.tdiv { width: 1px; height: 70px; background: #444; margin: 0 19px 0 13px; }
.toggle { width: 58px; height: 36px; border-radius: 8px; background: #383838; display: flex; align-items: center; }
.toggle span { width: 33px; height: 34px; border-radius: 8px; background: #2c2c2c; border: 1px solid #444; display: flex; align-items: center; justify-content: center; box-shadow: 0 1px 3px #1e1e1e; }

.right { width: 361px; }
.rhead { height: 72px; padding: 0 12px 0 18px; display: flex; align-items: center; }
.ava { width: 36px; height: 36px; border-radius: 50%; background: #00897b; text-align: center; line-height: 36px; font-size: 15px; font-weight: 600; }
.chev.big { width: 12px; height: 7px; margin-left: 7px; }
.play { margin: 0 20px 0 auto; }
.share { width: 82px; height: 48px; margin-left: 13px; border-radius: 7px; background: #0c8ce9; text-align: center; line-height: 48px; font-weight: 600; letter-spacing: 0; }
.rtabs { height: 49px; border-bottom: 1px solid #444; padding: 0 24px 12px 12px; display: flex; align-items: center; flex: none; }
.rtabs .pill { width: 79px; padding: 0 11px; letter-spacing: -.05px; }
.rtabs .zoom { margin: 0 20px 0 auto; font-weight: 500; letter-spacing: -.3px; }
.rtabs .mut { margin-left: 24px; }
.page { height: 127px; padding: 18px 19px 0 23.500px; border-bottom: 1px solid #444; flex: none; }
.page b { display: block; line-height: 24px; }
.fill { margin-top: 24px; display: flex; align-items: center; justify-content: space-between; }
.field { width: 277px; height: 36px; border-radius: 7px; background: #383838; display: flex; align-items: center; padding-left: 8px; font-weight: 500; }
.field i { width: 19px; height: 19px; background: #1e1e1e; border-radius: 3px; box-shadow: 0 0 0 1px #303030; }
.field span:nth-child(2) { margin-left: 9px; width: 160px; letter-spacing: .3px; }
.field .pc { border-left: 1px solid #2c2c2c; line-height: 34px; padding-left: 12px; width: 58px; }
.field .pct { color: #a8a8a8; }
.rrow { height: 61px; border-bottom: 1px solid #444; padding: 0 20px 0 23.500px; display: flex; align-items: center; justify-content: space-between; color: #b3b3b3; font-weight: 600; letter-spacing: -.2px; flex: none; }
.rrow .pl { margin: 0 2.500px 2px 0; }
.help { width: 48px; height: 48px; border-radius: 50%; background: #1e1e1e; margin: auto 18px 18px auto; display: flex; align-items: center; justify-content: center; }

/* side bar */
.edgebar { width: 66px; position: relative; display: flex; flex-direction: column; align-items: center; padding-top: 3.500px; }
.edgebar span { height: 60px; width: 66px; display: flex; align-items: center; justify-content: center; flex: none; }
.edgebar hr { width: 42px; height: 1px; border: 0; margin: 0; background: #c98fa3; flex: none; }
.edgebar span + hr { margin-top: 17px; }
.edgebar .ebp { margin-top: 18px; }
.edgebar .ebs { margin-top: 189px; }
.edgebar .ebs + hr { margin-top: 4px; }
.edgebar .ebg { margin-top: 3px; }
.floater { position: absolute; left: -1px; top: 264px; width: 52px; height: 60px; border-radius: 0 12px 12px 0; background: rgba(95, 70, 95, .42); border: solid rgba(150, 105, 130, .1); border-width: 4px 4px 4px 0; display: flex; align-items: center; padding-left: 10px; }

/* taskbar */
.taskbar { height: 72px; flex: none; border-top: 2px solid rgba(110, 105, 100, .55); padding-bottom: 1.500px; color: #fff; display: flex; align-items: center; background: linear-gradient(90deg, #122540 0, #122641 120px, #152a3a 240px, #1d2733 330px, #282131 420px, #331f25 540px, #38201d 680px, #32211f 820px, #2c2324 1000px, #2b2326 1300px, #2a2226 1420px, #272230 1490px, #1c2535 1600px, #12273f 1660px, #142b3a 1760px, #152a38 1920px); }
.widget { width: 42px; margin-left: 33px; position: relative; }
.widget em { position: absolute; left: 14px; top: -9px; width: 23px; height: 24px; border-radius: 50%; background: #ff99a4; color: #000; font-size: 15px; line-height: 23px; text-align: center; }
.start { margin-left: 262px; }
.search { width: 330px; height: 48px; margin-left: 20px; border-radius: 24px; border: 1px solid #665a5e; background: linear-gradient(90deg, #463e4a, #503e3f 70%, #513d38); display: flex; align-items: center; padding: 0 5px 0 17px; }
.search span { margin: 0 auto 0 13px; font-size: 19.500px; letter-spacing: -.3px; color: #dcd8d8; }
.apps { display: flex; margin-left: 6px; }
.apps span { width: 60px; height: 60px; margin-left: 6px; display: flex; align-items: center; justify-content: center; position: relative; border-radius: 7px; }
.apps span:first-child { margin-left: 0; }
.apps .on { background: #3b3231; border: 1px solid #4a4140; }
.apps i, .apps .on::after { content: ""; position: absolute; bottom: 1px; left: 26px; width: 8px; height: 5px; border-radius: 3px; background: #9b9694; }
.apps .on::after { left: 17px; width: 24px; bottom: 0; background: #4cc2ff; }
.cv { font: italic 700 12px "Liberation Serif", serif; fill: #fff; letter-spacing: -.4px; }
.tray { margin-left: auto; display: flex; align-items: center; padding-right: 29px; }
.sync { margin-left: 26px; }
.ind { margin-left: 29px; font-size: 18px; letter-spacing: -.2px; width: 43px; }
.wifi { margin-left: 16px; }
.spk { margin-left: 10px; }
.bat { margin-left: 11px; }
.clock { margin-left: 12px; width: 104px; text-align: right; font-size: 17.500px; letter-spacing: .1px; line-height: 24px; white-space: nowrap; }
.bell { margin-left: 13px; }
.copre { width: 36px; height: 34px; margin-left: 27px; position: relative; }
.copre em { position: absolute; left: 8px; top: 23px; width: 28px; height: 11px; border-radius: 3px; background: #ffc80a; color: #1a1a1a; font-size: 10px; font-weight: 800; line-height: 11px; text-align: center; }
```
